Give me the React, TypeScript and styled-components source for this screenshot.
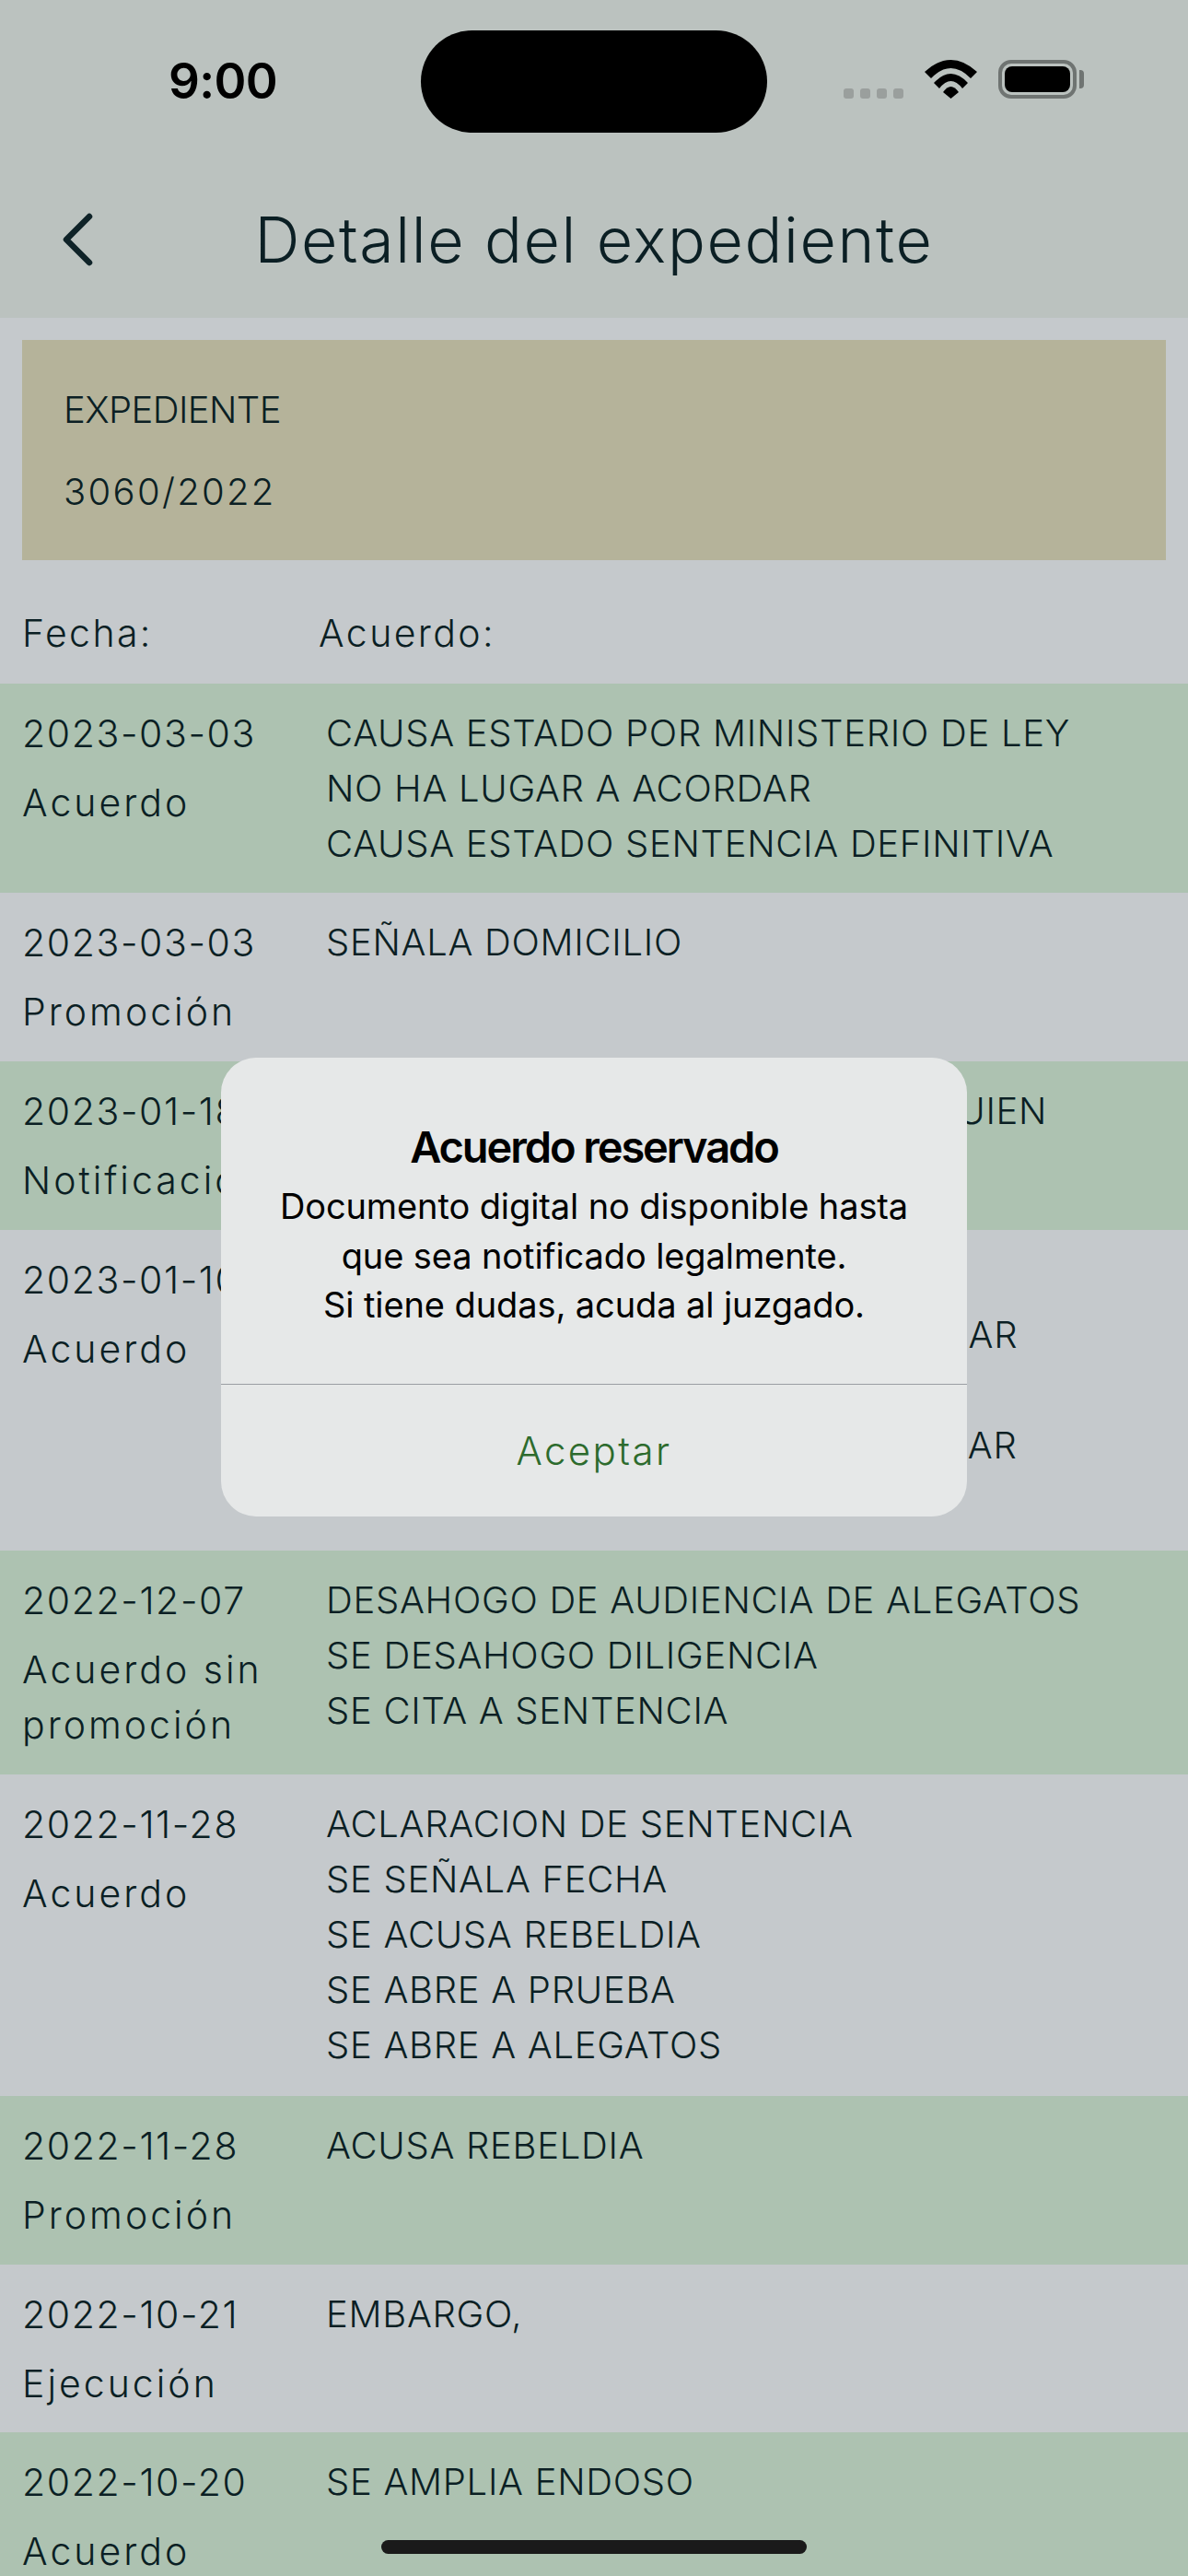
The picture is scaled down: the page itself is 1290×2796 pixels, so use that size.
import styled, { createGlobalStyle } from "styled-components"

const Global = createGlobalStyle`
    html, body { margin: 0; padding: 0; background: #c5c9cc; }
    body { width: 1290px; height: 2796px; overflow: hidden; }
    #root { width: 1290px; height: 2796px; }
`

const Screen = styled.div`
    position: relative;
    width: 1290px;
    height: 2796px;
    overflow: hidden;
    background: #c5c9cc;
    color: #0b1f24;
    font-family: Inter, "Liberation Sans", sans-serif;
    font-weight: 330;
`

const TopArea = styled.header`
    height: 345px;
    background: #bbc2bf;
    display: flex;
    flex-direction: column;
`

const StatusBar = styled.div`
    display: flex;
    align-items: flex-start;
    height: 198px;
    padding-top: 33px;
    box-sizing: border-box;
`

const Clock = styled.div`
    width: 457px;
    box-sizing: border-box;
    padding: 25px 0 0 183px;
    font-weight: 600;
    font-size: 53px;
    line-height: 60px;
    color: #000;
    letter-spacing: -0.7px;
`

const Island = styled.div`
    width: 376px;
    height: 111px;
    border-radius: 56px;
    background: #000;
`

const StatusIcons = styled.div`
    display: flex;
    align-items: flex-end;
    margin: 32px 0 0 83px;
`

const Dots = styled.div`
    display: flex;
    gap: 7px;
    margin-right: 23px;
`

const Dot = styled.span`
    width: 11px;
    height: 11px;
    border-radius: 3px;
    background: #9a9f9d;
`

const BatteryWrap = styled.div`
    display: flex;
    align-items: center;
    margin-left: 23px;
`

const BatteryBody = styled.div`
    width: 85px;
    height: 42px;
    box-sizing: border-box;
    border: 4px solid #6f7472;
    border-radius: 14px;
    padding: 3px;
    display: flex;
`

const BatteryFill = styled.div`
    flex: 1;
    background: #000;
    border-radius: 8px;
`

const BatteryNub = styled.div`
    width: 5px;
    height: 20px;
    margin-left: 3px;
    background: #6f7472;
    border-radius: 0 4px 4px 0;
`

const NavBar = styled.div`
    display: flex;
    align-items: center;
    height: 124px;
`

const BackIcon = styled.svg`
    width: 34px;
    height: 58px;
    margin-left: 67px;
    flex: none;
`

const Title = styled.h1`
    margin: 0 0 0 -101px;
    flex: 1;
    text-align: center;
    font-size: 68px;
    font-weight: 350;
    line-height: 80px;
    letter-spacing: 1.6px;
`

const Card = styled.section`
    margin: 24px 24px 0;
    height: 239px;
    box-sizing: border-box;
    padding: 46px 45px 0;
    background: #b5b39a;
`

const CardLine = styled.div<{ $spacing: number }>`
    font-size: 40px;
    line-height: 60px;
    margin-bottom: 29px;
    letter-spacing: ${(p) => p.$spacing}px;
`

const TableHead = styled.div`
    display: flex;
    height: 134px;
    align-items: center;
    padding: 24px 24px 0;
    box-sizing: border-box;
    font-size: 41px;
    line-height: 60px;
    letter-spacing: 2.4px;
`

const HeadCell = styled.div<{ $w?: number }>`
    width: ${(p) => (p.$w ? `${p.$w}px` : "auto")};
`

const Row = styled.div<{ $green?: boolean; $h: number }>`
    display: grid;
    grid-template-columns: 330px 1fr;
    height: ${(p) => p.$h}px;
    box-sizing: border-box;
    padding: 24px 0 0 24px;
    background: ${(p) => (p.$green ? "#adc2b1" : "#c5c9cc")};
`

const LeftCell = styled.div`
    font-size: 41px;
    line-height: 60px;
    letter-spacing: 3px;
`

const DateText = styled.div`
    margin-bottom: 15px;
    letter-spacing: 1.6px;
`

const RightCell = styled.div`
    font-size: 40px;
    line-height: 60px;
    letter-spacing: 0.7px;
    white-space: pre;
`

const Overlay = styled.div`
    position: absolute;
    left: 240px;
    top: 1148px;
    width: 810px;
    height: 498px;
    border-radius: 38px;
    background: #e6e8e8;
    display: flex;
    flex-direction: column;
    text-align: center;
`

const DialogBody = styled.div`
    height: 355px;
    box-sizing: border-box;
    padding-top: 67px;
    border-bottom: 1.5px solid #9a9ea3;
`

const DialogTitle = styled.div`
    font-size: 47px;
    line-height: 60px;
    font-weight: 600;
    color: #000;
    letter-spacing: -2.1px;
`

const DialogText = styled.div`
    font-size: 38px;
    line-height: 53.5px;
    font-weight: 400;
    color: #000;
    margin-top: 8px;
    letter-spacing: -0.1px;
`

const AcceptButton = styled.button`
    flex: 1;
    background: none;
    border: 0;
    padding: 0;
    font-family: inherit;
    font-weight: 330;
    font-size: 42px;
    color: #2d6b2d;
    letter-spacing: 2.4px;
`

const HomeBar = styled.div`
    position: absolute;
    left: 414px;
    top: 2757px;
    width: 462px;
    height: 15px;
    border-radius: 8px;
    background: #1a1a1a;
`

type Item = { date: string; kind: string; lines: string[]; h: number }

const items: Item[] = [
    { date: "2023-03-03", kind: "Acuerdo", h: 227, lines: ["CAUSA ESTADO POR MINISTERIO DE LEY", "NO HA LUGAR A ACORDAR", "CAUSA ESTADO SENTENCIA DEFINITIVA"] },
    { date: "2023-03-03", kind: "Promoción", h: 183, lines: ["SEÑALA DOMICILIO"] },
    { date: "2023-01-18", kind: "Notificación", h: 183, lines: ["SE NOTIFICA LA RESOLUCION, A QUIEN"] },
    { date: "2023-01-10", kind: "Acuerdo", h: 348, lines: ["SE DICTA SENTENCIA", "SE SEÑALA FECHA PARA DESAHOGAR", "SE ACUSA REBELDIA", "SE ORDENA EMBARGAR Y ACUMULAR", "SE ABRE A PRUEBA"] },
    { date: "2022-12-07", kind: "Acuerdo sin promoción", h: 243, lines: ["DESAHOGO DE AUDIENCIA DE ALEGATOS", "SE DESAHOGO DILIGENCIA", "SE CITA A SENTENCIA"] },
    { date: "2022-11-28", kind: "Acuerdo", h: 349, lines: ["ACLARACION DE SENTENCIA", "SE SEÑALA FECHA", "SE ACUSA REBELDIA", "SE ABRE A PRUEBA", "SE ABRE A ALEGATOS"] },
    { date: "2022-11-28", kind: "Promoción", h: 183, lines: ["ACUSA REBELDIA"] },
    { date: "2022-10-21", kind: "Ejecución", h: 182, lines: ["EMBARGO,"] },
    { date: "2022-10-20", kind: "Acuerdo", h: 183, lines: ["SE AMPLIA ENDOSO"] },
]

function WifiIcon() {
    return (
        <svg width="57" height="42" viewBox="0 0 57 42" fill="#000">
            <path d="M0 13Q28.5 -13 57 13L50 20Q28.5 -2 7 20Z" />
            <path d="M10 25Q28.5 5 47 25L41 31Q28.5 15 16 31Z" />
            <path d="M20 35Q28.5 23 37 35L28.5 42Z" />
        </svg>
    )
}

export default function App() {
    return (
        <Screen>
            <Global />
            <TopArea>
                <StatusBar>
                    <Clock>9:00</Clock>
                    <Island />
                    <StatusIcons>
                        <Dots><Dot /><Dot /><Dot /><Dot /></Dots>
                        <WifiIcon />
                        <BatteryWrap>
                            <BatteryBody><BatteryFill /></BatteryBody>
                            <BatteryNub />
                        </BatteryWrap>
                    </StatusIcons>
                </StatusBar>
                <NavBar>
                    <BackIcon viewBox="0 0 34 58" fill="none">
                        <path d="M30 4L5 29L30 54" stroke="#0f2328" strokeWidth="6.5" strokeLinecap="round" strokeLinejoin="round" />
                    </BackIcon>
                    <Title>Detalle del expediente</Title>
                </NavBar>
            </TopArea>
            <Card>
                <CardLine $spacing={-0.6}>EXPEDIENTE</CardLine>
                <CardLine $spacing={2.3}>3060/2022</CardLine>
            </Card>
            <TableHead>
                <HeadCell $w={322}>Fecha:</HeadCell>
                <HeadCell>Acuerdo:</HeadCell>
            </TableHead>
            {items.map((item, i) => (
                <Row key={i} $green={i % 2 === 0} $h={item.h}>
                    <LeftCell>
                        <DateText>{item.date}</DateText>
                        {item.kind}
                    </LeftCell>
                    <RightCell>{item.lines.join("\n")}</RightCell>
                </Row>
            ))}
            <Overlay>
                <DialogBody>
                    <DialogTitle>Acuerdo reservado</DialogTitle>
                    <DialogText>
                        Documento digital no disponible hasta<br />
                        que sea notificado legalmente.<br />
                        Si tiene dudas, acuda al juzgado.
                    </DialogText>
                </DialogBody>
                <AcceptButton>Aceptar</AcceptButton>
            </Overlay>
            <HomeBar />
        </Screen>
    )
}
